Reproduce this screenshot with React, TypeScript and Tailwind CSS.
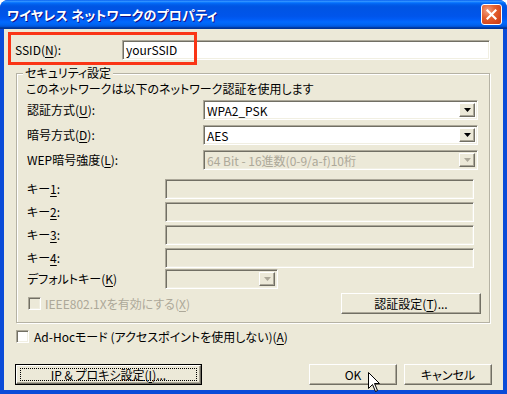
import type { ReactNode } from 'react';

const sunken =
  'border border-t-[#ACA899] border-l-[#ACA899] border-b-white border-r-white shadow-[inset_1px_1px_0_#716F64,inset_-1px_-1px_0_#F1EFE2]';
const raised =
  'border border-t-white border-l-white border-b-[#716F64] border-r-[#716F64] shadow-[inset_-1px_-1px_0_#ACA899] bg-[#ECE9D8]';

function U({ children }: { children: ReactNode }) {
  return <span className="underline underline-offset-[2px] decoration-1">{children}</span>;
}

function DropArrow({ disabled }: { disabled?: boolean }) {
  return (
    <div className={`w-[16px] h-full shrink-0 flex items-center justify-center ${raised}`}>
      <svg width="7" height="4" viewBox="0 0 7 4">
        <polygon points="0,0 7,0 3.5,4" fill={disabled ? '#ACA899' : '#000'} />
      </svg>
    </div>
  );
}

function Combo({ value, width, disabled }: { value: string; width: string; disabled?: boolean }) {
  return (
    <div className={`flex h-[20px] p-[2px] ${width} ${sunken} ${disabled ? 'bg-[#ECE9D8]' : 'bg-white'}`}>
      <div className={`flex-1 pl-[1px] leading-[16px] whitespace-nowrap ${disabled ? 'text-[#ACA899]' : 'text-black'}`}>
        {value}
      </div>
      <DropArrow disabled={disabled} />
    </div>
  );
}

function CheckBox({ disabled }: { disabled?: boolean }) {
  return <div className={`w-[13px] h-[13px] shrink-0 ${sunken} ${disabled ? 'bg-[#ECE9D8]' : 'bg-white'}`} />;
}

function Button({ children, width, focused }: { children: ReactNode; width: string; focused?: boolean }) {
  if (focused) {
    return (
      <div className={`h-[21px] ${width} border border-black`}>
        <div className={`h-full w-full flex items-center justify-center ${raised}`}>
          <div className="h-[13px] w-[calc(100%-6px)] border border-dotted border-black flex items-center justify-center leading-[12px]">
            {children}
          </div>
        </div>
      </div>
    );
  }
  return (
    <div className={`h-[21px] ${width} flex items-center justify-center leading-[14px] ${raised}`}>{children}</div>
  );
}

function Row({ label, children, height }: { label: ReactNode; children: ReactNode; height: string }) {
  return (
    <div className={`flex items-center ${height}`}>
      <div className="pl-[10px] w-[148px] shrink-0 whitespace-nowrap">{label}</div>
      {children}
    </div>
  );
}

export default function App() {
  return (
    <div className="w-[507px] h-[394px] bg-white font-['Noto_Sans_CJK_JP',sans-serif] [font-feature-settings:'palt'] text-[12px]">
      <div className="w-[507px] h-[394px] flex flex-col rounded-t-[8px] overflow-hidden bg-[#0A4BD8]">
        {/* title bar */}
        <div className="h-[29px] shrink-0 flex items-center pl-[7px] pr-[5px] bg-[linear-gradient(180deg,#0058ee_0%,#3593ff_4%,#288eff_6%,#127dff_8%,#036ffc_10%,#0262ee_14%,#0057e5_20%,#0054e3_24%,#0055eb_56%,#005bf5_66%,#026afe_76%,#0062ef_86%,#0052d6_92%,#0040ab_94%,#003092_100%)]">
          <div className="flex-1 text-white font-bold text-[13px] tracking-[0.2px] [text-shadow:1px_1px_#0F1089] whitespace-nowrap">
            ワイヤレス ネットワークのプロパティ
          </div>
          <div className="w-[21px] h-[21px] rounded-[3px] border border-white flex items-center justify-center bg-[radial-gradient(circle_at_30%_30%,#F2A184_0%,#E4602F_40%,#D5461C_75%,#C33A18_100%)]">
            <svg width="11" height="11" viewBox="0 0 11 11">
              <path d="M1.5 1.5 L9.5 9.5 M9.5 1.5 L1.5 9.5" stroke="#fff" strokeWidth="2.2" strokeLinecap="square" />
            </svg>
          </div>
        </div>

        {/* client area */}
        <div className="relative flex-1 mx-[4px] mb-[4px] bg-[#ECE9D8] flex flex-col text-black">
          <div className="absolute left-[4px] top-[3px] w-[189px] h-[33px] border-[3px] border-[#FA3516]" />

          <div className="flex items-center mt-[11px] pl-[11px] h-[20px]">
            <div className="w-[107px] shrink-0">
              SSID(<U>N</U>):
            </div>
            <div className={`w-[368px] h-[20px] bg-white pl-[3px] leading-[18px] ${sunken}`}>yourSSID</div>
          </div>

          {/* security group */}
          <div className="relative mt-[13px] ml-[12px] w-[474px] h-[250px] border border-[#B5B2A4] shadow-[inset_1px_1px_0_#fff,1px_1px_0_#fff] flex flex-col">
            <div className="absolute left-[6px] -top-[8px] px-[2px] bg-[#ECE9D8] leading-[14px]">セキュリティ設定</div>

            <div className="mt-[8px] pl-[9px] leading-[14px] whitespace-nowrap">
              このネットワークは以下のネットワーク認証を使用します
            </div>

            <div className="mt-[4px] flex flex-col gap-[5px]">
              <Row label={<>認証方式(<U>U</U>):</>} height="h-[20px]">
                <div className="ml-[38px]">
                  <Combo value="WPA2_PSK" width="w-[275px]" />
                </div>
              </Row>
              <Row label={<>暗号方式(<U>D</U>):</>} height="h-[20px]">
                <div className="ml-[38px]">
                  <Combo value="AES" width="w-[275px]" />
                </div>
              </Row>
              <Row label={<>WEP暗号強度(<U>L</U>):</>} height="h-[20px]">
                <div className="ml-[38px]">
                  <Combo value="64 Bit - 16進数(0-9/a-f)10桁" width="w-[275px]" disabled />
                </div>
              </Row>
            </div>

            <div className="mt-[9px] flex flex-col gap-[3px]">
              {['1', '2', '3', '4'].map((k) => (
                <Row key={k} label={<>キー<U>{k}</U>:</>} height="h-[20px]">
                  <div className={`w-[309px] h-[20px] bg-[#ECE9D8] ${sunken}`} />
                </Row>
              ))}
            </div>

            <div className="mt-[1px]">
              <Row label={<>デフォルトキー(<U>K</U>)</>} height="h-[20px]">
                <Combo value="" width="w-[113px]" disabled />
              </Row>
            </div>

            <div className="mt-[4px] flex items-center h-[21px] pl-[11px]">
              <CheckBox disabled />
              <div className="ml-[4px] text-[#ACA899] whitespace-nowrap">
                IEEE802.1Xを有効にする(<U>X</U>)
              </div>
              <div className="ml-auto mr-[8px]">
                <Button width="w-[140px]">
                  認証設定(<U>T</U>)...
                </Button>
              </div>
            </div>
          </div>

          <div className="mt-[7px] ml-[12px] flex items-center h-[13px]">
            <CheckBox />
            <div className="ml-[5px] whitespace-nowrap">
              Ad-Hocモード (アクセスポイントを使用しない)(<U>A</U>)
            </div>
          </div>

          <div className="mt-[21px] flex px-[11px]">
            <Button width="w-[187px]" focused>
              IP &amp; プロキシ設定(<U>I</U>)...
            </Button>
            <div className="ml-auto flex gap-[7px]">
              <Button width="w-[88px]">OK</Button>
              <Button width="w-[88px]">キャンセル</Button>
            </div>
          </div>

          {/* mouse cursor */}
          <svg className="absolute left-[364px] top-[343px]" width="13" height="21" viewBox="0 0 13 21">
            <path d="M0.5 0.5 L0.5 16.5 L4.5 12.5 L7.5 19.5 L9.5 18.5 L6.5 11.5 L11.5 11.5 Z" fill="#fff" stroke="#000" strokeWidth="1" />
          </svg>
        </div>
      </div>
    </div>
  );
}
